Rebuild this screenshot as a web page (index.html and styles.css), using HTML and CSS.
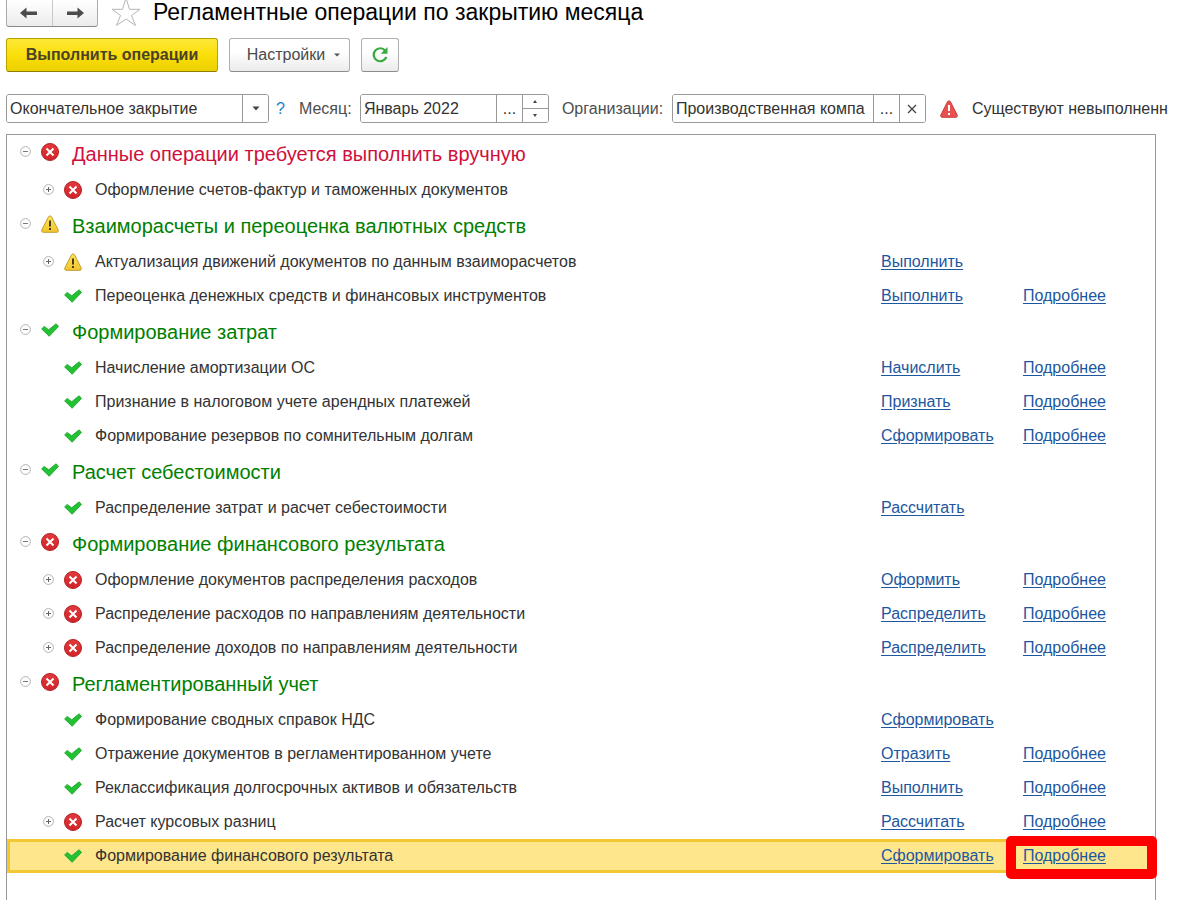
FILE: index.html
```html
<!DOCTYPE html>
<html lang="ru">
<head>
<meta charset="utf-8">
<title>Регламентные операции по закрытию месяца</title>
<link rel="stylesheet" href="styles.css">
</head>
<body>
<svg class="sprite" aria-hidden="true">
  <defs>
    <linearGradient id="red-fill" x1="0" y1="0" x2="0" y2="1"><stop offset="0" stop-color="#e23a3c"/><stop offset="1" stop-color="#cf2429"/></linearGradient>
    <linearGradient id="yellow-fill" x1="0" y1="0" x2="0" y2="1"><stop offset="0" stop-color="#ffe65a"/><stop offset="1" stop-color="#f2c52c"/></linearGradient>
  </defs>
  <symbol id="minus" viewBox="0 0 11 11"><circle cx="5.5" cy="5.5" r="4.9" fill="#fff" stroke="#aaa" stroke-width=".9"/><path d="M3 5.5h5" stroke="#777"/></symbol>
  <symbol id="plus" viewBox="0 0 11 11"><circle cx="5.5" cy="5.5" r="4.9" fill="#fff" stroke="#aaa" stroke-width=".9"/><path d="M3 5.5h5M5.5 3v5" stroke="#666"/></symbol>
  <symbol id="error" viewBox="0 0 18 18"><circle cx="9" cy="9" r="8.5" fill="url(#red-fill)" stroke="#b51f24"/><path d="M5.5 5.5l7 7M12.5 5.5l-7 7" stroke="#fff" stroke-width="2"/></symbol>
  <symbol id="warn" viewBox="0 0 18 18"><path d="M7.6 1.6Q9 0 10.4 1.6L17.2 15q.6 2-1.2 2.3H2Q.2 17 .8 15z" fill="url(#yellow-fill)" stroke="#c39c32"/><path d="M9 5.5v6M9 13v2" stroke="#4a3b10" stroke-width="2"/></symbol>
  <symbol id="done" viewBox="0 0 18 18"><path d="M.6 7.900L3.200 5.400 7.700 8.800 15 2.800l2.600 2.500L8.200 15.300z" fill="#22c233" stroke="#189e28" stroke-width=".8"/></symbol>
</svg>

<header class="title-bar">
  <div class="nav">
    <button class="nav-button" type="button" aria-label="Назад"><svg width="18" height="12" viewBox="0 0 18 12"><path d="M0 6l6.500-5.500v4H17v3.500H6.500v3.500z" fill="#4c4c4c"/></svg></button>
    <button class="nav-button" type="button" aria-label="Вперед"><svg width="18" height="12" viewBox="0 0 18 12"><path d="M18 6L11.500.5v4H1v3.500h10.500v3.500z" fill="#4c4c4c"/></svg></button>
  </div>
  <button class="star" type="button" aria-label="Добавить в избранное"><svg width="30" height="27" viewBox="0 0 30 27"><path d="M15-2l3.500 11.300H29L20.500 15.500 24.500 25.500 15 19 5.500 25.500 9.500 15.500 1 9.300h10.500z" fill="#fff" stroke="#b5b5b5"/></svg></button>
  <h1 class="title">Регламентные операции по закрытию месяца</h1>
</header>

<div class="commands">
  <button class="button button-primary" type="button">Выполнить операции</button>
  <button class="button button-menu" type="button">Настройки<svg width="6" height="4" viewBox="0 0 6 4"><path d="M0 .5h6L3 3.500z" fill="#555"/></svg></button>
  <button class="button button-icon" type="button" aria-label="Обновить"><svg width="18" height="18" viewBox="0 0 18 18"><path d="M14.300 4.700A6.500 6.500 0 1 0 15.300 11" fill="none" stroke="#3aa93f" stroke-width="2.200"/><path d="M16.500 1v6.800H9.700z" fill="#3aa93f"/></svg></button>
</div>

<form class="filters">
  <div class="field field-mode">
    <select class="control" aria-label="Режим закрытия"><option>Окончательное закрытие</option></select>
    <span class="part"><svg width="8" height="5" viewBox="0 0 8 5"><path d="M.5.500h7L4 4.500z" fill="#444"/></svg></span>
  </div>
  <a class="help" href="#help">?</a>
  <label class="caption caption-month" for="month">Месяц:</label>
  <div class="field field-month">
    <input class="control" id="month" type="text" value="Январь 2022">
    <button class="part" type="button" aria-label="Выбрать месяц">...</button>
    <div class="spinner">
      <button class="spin" type="button" aria-label="Следующий месяц"><svg width="4" height="3" viewBox="0 0 4 3"><path d="M0 3h4L2 0z" fill="#444"/></svg></button>
      <button class="spin" type="button" aria-label="Предыдущий месяц"><svg width="4" height="3" viewBox="0 0 4 3"><path d="M0 0h4L2 3z" fill="#444"/></svg></button>
    </div>
  </div>
  <label class="caption caption-org" for="org">Организации:</label>
  <div class="field field-org">
    <input class="control" id="org" type="text" value="Производственная компа">
    <button class="part" type="button" aria-label="Выбрать организацию">...</button>
    <button class="part" type="button" aria-label="Очистить"><svg width="10" height="10" viewBox="0 0 10 10"><path d="M1 1l8 8M9 1L1 9" stroke="#444" stroke-width="1.300"/></svg></button>
  </div>
  <svg class="alert" width="18" height="18" viewBox="0 0 18 18"><path d="M7.600 1.600Q9 0 10.400 1.600L17.200 15q.6 2-1.200 2.300H2Q.2 17 .8 15z" fill="#e9504f" stroke="#c9403f"/><path d="M9 5v6M9 13v2" stroke="#fff" stroke-width="2"/></svg>
  <span class="message">Существуют невыполненн</span>
</form>

<main class="panel">
  <table class="tree">
    <colgroup><col><col class="col-action"><col class="col-more"></colgroup>
    <tbody>
      <tr class="group manual"><th colspan="3"><div class="node"><svg class="toggle"><use href="#minus"/></svg><svg class="state"><use href="#error"/></svg>Данные операции требуется выполнить вручную</div></th></tr>
      <tr><td><div class="node"><svg class="toggle"><use href="#plus"/></svg><svg class="state"><use href="#error"/></svg>Оформление счетов-фактур и таможенных документов</div></td><td></td><td></td></tr>
    </tbody>
    <tbody>
      <tr class="group"><th colspan="3"><div class="node"><svg class="toggle"><use href="#minus"/></svg><svg class="state"><use href="#warn"/></svg>Взаиморасчеты и переоценка валютных средств</div></th></tr>
      <tr><td><div class="node"><svg class="toggle"><use href="#plus"/></svg><svg class="state"><use href="#warn"/></svg>Актуализация движений документов по данным взаиморасчетов</div></td><td><a href="#run">Выполнить</a></td><td></td></tr>
      <tr><td><div class="node"><svg class="toggle"></svg><svg class="state"><use href="#done"/></svg>Переоценка денежных средств и финансовых инструментов</div></td><td><a href="#run">Выполнить</a></td><td><a href="#more">Подробнее</a></td></tr>
    </tbody>
    <tbody>
      <tr class="group"><th colspan="3"><div class="node"><svg class="toggle"><use href="#minus"/></svg><svg class="state"><use href="#done"/></svg>Формирование затрат</div></th></tr>
      <tr><td><div class="node"><svg class="toggle"></svg><svg class="state"><use href="#done"/></svg>Начисление амортизации ОС</div></td><td><a href="#run">Начислить</a></td><td><a href="#more">Подробнее</a></td></tr>
      <tr><td><div class="node"><svg class="toggle"></svg><svg class="state"><use href="#done"/></svg>Признание в налоговом учете арендных платежей</div></td><td><a href="#run">Признать</a></td><td><a href="#more">Подробнее</a></td></tr>
      <tr><td><div class="node"><svg class="toggle"></svg><svg class="state"><use href="#done"/></svg>Формирование резервов по сомнительным долгам</div></td><td><a href="#run">Сформировать</a></td><td><a href="#more">Подробнее</a></td></tr>
    </tbody>
    <tbody>
      <tr class="group"><th colspan="3"><div class="node"><svg class="toggle"><use href="#minus"/></svg><svg class="state"><use href="#done"/></svg>Расчет себестоимости</div></th></tr>
      <tr><td><div class="node"><svg class="toggle"></svg><svg class="state"><use href="#done"/></svg>Распределение затрат и расчет себестоимости</div></td><td><a href="#run">Рассчитать</a></td><td></td></tr>
    </tbody>
    <tbody>
      <tr class="group"><th colspan="3"><div class="node"><svg class="toggle"><use href="#minus"/></svg><svg class="state"><use href="#error"/></svg>Формирование финансового результата</div></th></tr>
      <tr><td><div class="node"><svg class="toggle"><use href="#plus"/></svg><svg class="state"><use href="#error"/></svg>Оформление документов распределения расходов</div></td><td><a href="#run">Оформить</a></td><td><a href="#more">Подробнее</a></td></tr>
      <tr><td><div class="node"><svg class="toggle"><use href="#plus"/></svg><svg class="state"><use href="#error"/></svg>Распределение расходов по направлениям деятельности</div></td><td><a href="#run">Распределить</a></td><td><a href="#more">Подробнее</a></td></tr>
      <tr><td><div class="node"><svg class="toggle"><use href="#plus"/></svg><svg class="state"><use href="#error"/></svg>Распределение доходов по направлениям деятельности</div></td><td><a href="#run">Распределить</a></td><td><a href="#more">Подробнее</a></td></tr>
    </tbody>
    <tbody>
      <tr class="group"><th colspan="3"><div class="node"><svg class="toggle"><use href="#minus"/></svg><svg class="state"><use href="#error"/></svg>Регламентированный учет</div></th></tr>
      <tr><td><div class="node"><svg class="toggle"></svg><svg class="state"><use href="#done"/></svg>Формирование сводных справок НДС</div></td><td><a href="#run">Сформировать</a></td><td></td></tr>
      <tr><td><div class="node"><svg class="toggle"></svg><svg class="state"><use href="#done"/></svg>Отражение документов в регламентированном учете</div></td><td><a href="#run">Отразить</a></td><td><a href="#more">Подробнее</a></td></tr>
      <tr><td><div class="node"><svg class="toggle"></svg><svg class="state"><use href="#done"/></svg>Реклассификация долгосрочных активов и обязательств</div></td><td><a href="#run">Выполнить</a></td><td><a href="#more">Подробнее</a></td></tr>
      <tr><td><div class="node"><svg class="toggle"><use href="#plus"/></svg><svg class="state"><use href="#error"/></svg>Расчет курсовых разниц</div></td><td><a href="#run">Рассчитать</a></td><td><a href="#more">Подробнее</a></td></tr>
      <tr class="selected"><td><div class="node"><svg class="toggle"></svg><svg class="state"><use href="#done"/></svg>Формирование финансового результата</div></td><td><a href="#run">Сформировать</a></td><td class="marked"><a href="#more">Подробнее</a><span class="marker"></span></td></tr>
    </tbody>
  </table>
</main>
</body>
</html>
```

FILE: styles.css
```css
* { box-sizing: border-box; }

body {
  display: flex;
  flex-direction: column;
  min-height: 100vh;
  margin: 0;
  padding: 0 22px 0 6px;
  overflow-x: hidden;
  background: #fff;
  color: #333;
  font: 16px/20px "Liberation Sans", Arial, sans-serif;
}

button, input, select { font: inherit; color: inherit; }
svg { flex: none; display: block; }
.sprite { position: absolute; width: 0; height: 0; }

.title-bar { display: flex; height: 27px; }
.nav {
  display: flex;
  width: 92px;
  border: 1px solid #aaa;
  border-top: 0;
  border-bottom-color: #888;
  border-radius: 0 0 3px 3px;
  background: linear-gradient(#fff, #ececec);
}
.nav-button {
  display: flex;
  flex: 1;
  align-items: center;
  justify-content: center;
  padding: 0;
  border: 0;
  background: none;
}
.nav-button + .nav-button { border-left: 1px solid #c8c8c8; }
.star { margin-left: 13px; padding: 0; border: 0; background: none; }
.title {
  margin: 0 0 0 12px;
  color: #000;
  font-size: 23px;
  font-weight: 400;
  line-height: 24px;
  white-space: nowrap;
}

.commands { display: flex; gap: 11px; margin-top: 11px; }
.button {
  display: flex;
  align-items: center;
  justify-content: center;
  height: 34px;
  padding: 0 16px;
  border: 1px solid #b0b0b0;
  border-bottom-color: #8c8c8c;
  border-radius: 3px;
  background: linear-gradient(#fff 40%, #ebebeb);
  color: #4a4a4a;
  white-space: nowrap;
}
.button-primary {
  min-width: 212px;
  border-color: #b9a200 #b9a200 #8f7d00;
  background: linear-gradient(#ffe838, #fbdf0a 50%, #ecd000);
  color: #4a4326;
  font-weight: 700;
}
.button-menu { gap: 9px; min-width: 121px; padding-right: 8px; }
.button-icon { width: 38px; padding: 0; }

.filters { display: flex; align-items: center; margin-top: 22px; white-space: nowrap; }
.field {
  display: flex;
  flex: none;
  height: 29px;
  overflow: hidden;
  border: 1px solid #999;
  border-radius: 3px;
}
.field-mode { width: 263px; }
.field-month { width: 189px; }
.field-org { width: 254px; }
.control {
  flex: 1;
  min-width: 0;
  padding: 0 0 0 3px;
  border: 0;
  outline: 0;
  appearance: none;
  background: #fff;
}
.part {
  display: flex;
  flex: none;
  align-items: center;
  justify-content: center;
  width: 26px;
  padding: 0;
  border: 0;
  border-left: 1px solid #999;
  background: #fff;
}
.spinner { display: flex; flex: none; flex-direction: column; width: 26px; border-left: 1px solid #999; }
.spin {
  display: flex;
  flex: 1;
  align-items: center;
  justify-content: center;
  padding: 0;
  border: 0;
  background: #fff;
}
.spin + .spin { border-top: 1px solid #999; }
.help { margin: 0 14px 0 7px; color: #1a7fc4; text-decoration: none; }
.caption { flex: none; color: #4d4d4d; }
.caption-month { width: 61px; }
.caption-org { width: 110px; margin-left: 13px; }
.alert { margin: 0 14px; }
.message { flex: 1; min-width: 0; margin-right: -22px; }

.panel { flex: 1; margin-top: 11px; border: 1px solid #999; border-bottom: 0; }
.tree { width: 100%; border-spacing: 0; table-layout: fixed; }
.col-action { width: 142px; }
.col-more { width: 140px; }
.tree td, .tree th { height: 34px; padding: 0; text-align: left; font-weight: 400; white-space: nowrap; }
.tree td + td { padding-left: 8px; }
.tree a { color: #1d57a0; text-underline-offset: 2px; }
.node { display: flex; align-items: center; padding-left: 36px; }
.toggle { width: 11px; height: 11px; margin: 0 10px 2px 0; }
.state { width: 18px; height: 18px; margin-right: 13px; }
.tree .group th { height: 38px; color: #008000; font-size: 20px; line-height: 24px; }
.tree .manual th { color: #d0103c; }
.group .node { padding-left: 13px; }
.group .state { margin-bottom: 4px; }
.group .toggle { margin-bottom: 6px; }

.selected { background: #fee68d; outline: 3px solid #f2c832; outline-offset: -3px; }
.marked { position: relative; }
.marker {
  position: absolute;
  inset: -3px -2px -6px -9px;
  border: 10px solid #f00;
  border-radius: 5px;
  pointer-events: none;
}
```
